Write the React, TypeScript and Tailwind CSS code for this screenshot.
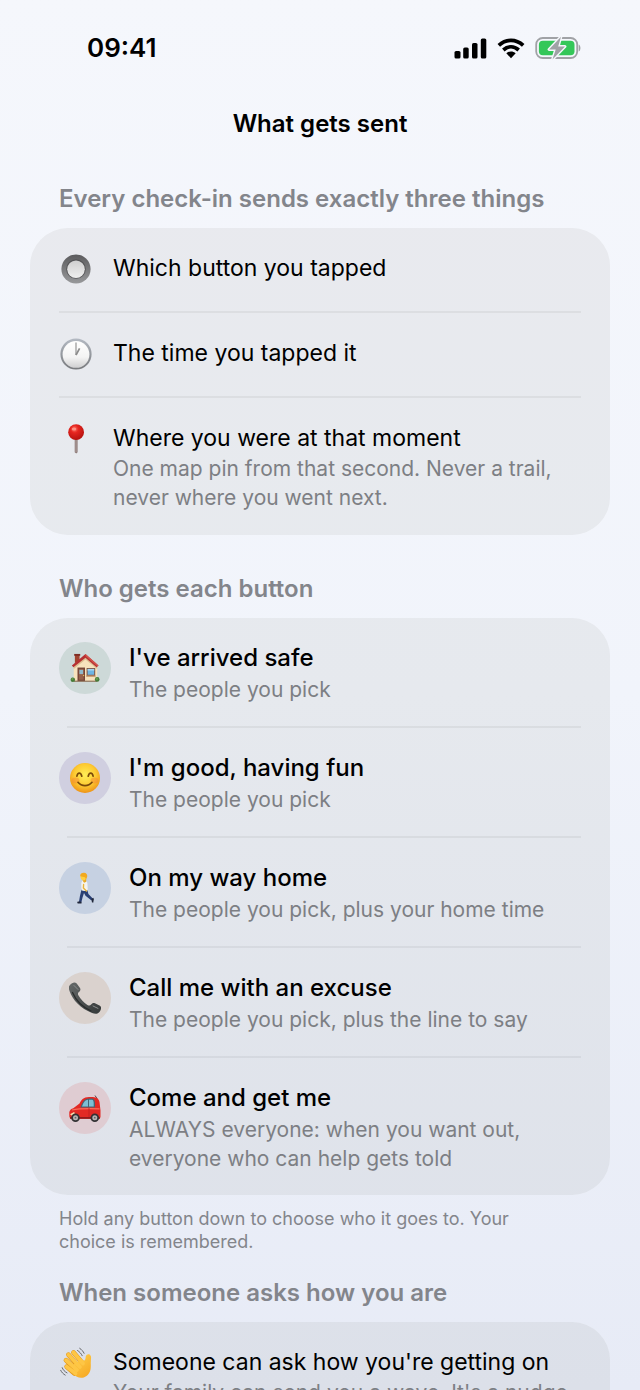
import type { ReactNode } from "react";

function RadioEmoji() {
  return (
    <svg viewBox="0 0 32 32" className="size-8" aria-hidden="true">
      <defs>
        <linearGradient id="radioRing" x1="0" y1="0" x2="0" y2="1">
          <stop offset="0" stopColor="#5b5b5d" />
          <stop offset="1" stopColor="#98999b" />
        </linearGradient>
        <linearGradient id="radioFace" x1="0" y1="0" x2="0" y2="1">
          <stop offset="0" stopColor="#cfcfcf" />
          <stop offset="1" stopColor="#efefef" />
        </linearGradient>
      </defs>
      <circle cx="16" cy="16" r="14.6" fill="url(#radioRing)" />
      <circle cx="16" cy="16" r="9.8" fill="#555557" />
      <circle cx="16" cy="16.3" r="8.8" fill="url(#radioFace)" />
    </svg>
  );
}

function ClockEmoji() {
  return (
    <svg viewBox="0 0 32 32" className="size-8" aria-hidden="true">
      <defs>
        <linearGradient id="clockRim" x1="0" y1="0" x2="0" y2="1">
          <stop offset="0" stopColor="#b4bac3" />
          <stop offset="1" stopColor="#77797c" />
        </linearGradient>
        <linearGradient id="clockFace" x1="0" y1="0" x2="0" y2="1">
          <stop offset="0" stopColor="#ffffff" />
          <stop offset="0.6" stopColor="#f4f4f4" />
          <stop offset="1" stopColor="#cfcfd0" />
        </linearGradient>
      </defs>
      <circle cx="16" cy="16" r="15.6" fill="url(#clockRim)" />
      <circle cx="16" cy="16.4" r="13.4" fill="url(#clockFace)" />
      <path d="M16 17V4.500" stroke="#8b8b8b" strokeWidth="1.100" />
      <path d="M16 17l3.600-6.700" stroke="#8b8b8b" strokeWidth="1.700" />
    </svg>
  );
}

function PinEmoji() {
  return (
    <svg viewBox="0 0 32 32" className="size-8" aria-hidden="true">
      <defs>
        <radialGradient id="pinHead" cx="0.4" cy="0.3" r="0.7">
          <stop offset="0" stopColor="#ff7566" />
          <stop offset="0.35" stopColor="#e5251f" />
          <stop offset="1" stopColor="#b5120f" />
        </radialGradient>
      </defs>
      <path d="M14.700 16h2.900v13.200l-1.400 1.400-1.500-1.400z" fill="#8d7a77" />
      <path d="M16 17v12" stroke="#b3a4a1" strokeWidth="0.900" />
      <circle cx="16.100" cy="9.200" r="7.900" fill="url(#pinHead)" />
      <ellipse cx="14" cy="6" rx="2.300" ry="1.500" fill="#ff9c90" opacity="0.800" />
    </svg>
  );
}

function HouseEmoji() {
  return (
    <svg viewBox="0 0 32 32" className="size-[30px]" aria-hidden="true">
      <path d="M5.2 1.5h5v9h-5z" fill="#a1432f" />
      <path d="M4.5 1h6.4v2H4.500z" fill="#7f2d24" />
      <path d="M4 14.500L16.500 3.500 29 14.500v15.500H4z" fill="#f7e2bd" />
      <path d="M4 14.500L16.500 3.500 29 14.500v2.500L16.500 7 4 17z" fill="#dcbd91" />
      <path d="M16.500 1L2 13.200l1.600 2L16.500 5l11.900 10.200 2-1.800z" fill="#b63032" />
      <path d="M16.500 1L30.400 13.400l-1 .9L16.500 3.300z" fill="#d5544b" />
      <path d="M8 15.500h8V30H8z" fill="#764536" />
      <path d="M9.500 17h5v11.500h-5z" fill="#98614b" />
      <path d="M10 18h4v4.500h-4z" fill="#91b9cb" />
      <circle cx="14.500" cy="24" r="0.7" fill="#e6be58" />
      <path d="M17.700 16h9.200v8.600h-9.200z" fill="#805848" />
      <path d="M18.800 17h7v6.200h-7z" fill="#6eb5e4" />
      <path d="M18.800 17h7v1.800h-7z" fill="#a3d4ef" />
      <path d="M17.300 24h10v1.500h-10z" fill="#c79b6f" />
      <path d="M4 29.500h25v1.200H4z" fill="#8a6d55" />
      <circle cx="3" cy="28.400" r="2.400" fill="#467b39" />
      <circle cx="29" cy="28.200" r="2.500" fill="#467b39" />
      <circle cx="2.600" cy="27.700" r="1.200" fill="#69994b" />
      <circle cx="28.600" cy="27.400" r="1.300" fill="#69994b" />
    </svg>
  );
}

function SmileEmoji() {
  return (
    <svg viewBox="0 0 32 32" className="size-8" aria-hidden="true">
      <defs>
        <radialGradient id="smileFace" cx="0.5" cy="0.4" r="0.6">
          <stop offset="0" stopColor="#ffee57" />
          <stop offset="0.6" stopColor="#fdca32" />
          <stop offset="1" stopColor="#ee9216" />
        </radialGradient>
      </defs>
      <circle cx="16" cy="16" r="15" fill="url(#smileFace)" />
      <ellipse cx="6.500" cy="18.500" rx="4" ry="3" fill="#f58335" opacity="0.45" />
      <ellipse cx="25.500" cy="18.500" rx="4" ry="3" fill="#f58335" opacity="0.45" />
      <g fill="none" stroke="#7a4a0a" strokeWidth="1.700" strokeLinecap="round">
        <path d="M7.900 14.200c.7-4.200 4-4.200 4.900 0" />
        <path d="M19.200 14.200c.9-4.200 4.200-4.200 4.900 0" />
        <path d="M9 20.300c3.500 4.400 10.500 4.400 14 0" />
      </g>
    </svg>
  );
}

function WalkerEmoji() {
  return (
    <svg viewBox="0 0 32 32" className="size-8" aria-hidden="true">
      <path d="M12.500 17.500h5.700l1.200 4.400 4.600 4.900-1.500 1.600-6-4.700-1.500-2.800-1.400 4.300-1.300 5.300-2.400-.2 1-6z" fill="#293e72" />
      <path d="M9 29.500l3.500.2v1.700H8.700c-.7-.7-.5-1.500.3-1.900zM22.500 27l1.700-1.300.7 1.200-.7 3.800-1.300-.5z" fill="#20273a" />
      <path d="M13.600 8.800c2-.9 4.500.1 4.800 2.400l.4 7c-2 1-4.500.9-6.300.1l-.2-6c0-1.500.4-2.900 1.300-3.500z" fill="#f5f4ef" />
      <path d="M14.600 12.500l-.2 3.500 3 3" fill="none" stroke="#e9b43d" strokeWidth="1.400" strokeLinecap="round" />
      <path d="M13.200 5h4v4.700l-2 1-1.200-1.500z" fill="#e7a928" />
      <path d="M11.500 3.800c-.2 2.600.6 4.700 2.800 4.700 2.100 0 3.200-1.900 3.100-4.500z" fill="#ffcf3f" />
      <path d="M11.200 4.200C10.800 1.800 13 .7 15 .8c2.200.1 3.700 1.700 3.200 4L17 7.200l-1-2z" fill="#f2a91f" />
    </svg>
  );
}

function PhoneEmoji() {
  return (
    <svg viewBox="0 0 32 32" className="size-8" aria-hidden="true">
      <defs>
        <linearGradient id="phoneBody" x1="0" y1="0" x2="1" y2="1">
          <stop offset="0" stopColor="#656969" />
          <stop offset="1" stopColor="#353939" />
        </linearGradient>
      </defs>
      <path
        d="M1 3C2.800.700 5.800-.500 7.700 1.400L11 6c1 1.700.1 3.200-1.400 4.300-1 .8-.8 2.100-.1 3.300 2.300 4 5.200 7 8.900 9.300 1.600 1 2.700.9 3.700-.3 1-1.500 2.300-2 3.900-1.300l5 2.500c2 1.400.9 4.700-1.100 6.700-1.600 1.700-4 1.600-6.800.5C11.600 26.400 3.900 18.500.500 9-.5 6.300-.5 4.400 1 3z"
        fill="url(#phoneBody)"
      />
      <path d="M3.500 10.500C7 18.700 13.500 25 22 29" fill="none" stroke="#282b2b" strokeWidth="1.300" strokeLinecap="round" />
      <path d="M5 3.500l4 4M24 24l5 2.400" stroke="#8b8e8e" strokeWidth="1" strokeLinecap="round" />
    </svg>
  );
}

function CarEmoji() {
  return (
    <svg viewBox="0 -2 32 32" className="size-8" aria-hidden="true">
      <path d="M28 4.500l-2-3" stroke="#574747" strokeWidth="1" />
      <path d="M10.500 9.500C13 4 16 3 22 3c5 0 7.500.7 8.500 5l1 8.500v6.500c-.3 1.300-1 1.700-2 1.700H3C1 24.700.2 23.500.3 21v-3c.5-2 2-3.200 4-3.800z" fill="#e22924" />
      <path d="M11.500 13.500C13.500 7 16 4.800 20 4.600h3.500c1.700.2 2.300 2 2.500 4.200v4.700z" fill="#436674" />
      <path d="M13 12.500c1.700-4.400 3.200-6.400 6-6.700V12.500zM20 5.800h3c1.200.2 1.600 1.600 1.700 3v3.700H20z" fill="#7dbfd4" />
      <path d="M3 16c7-1.600 19-1.500 27.500-1.200" fill="none" stroke="#f96b57" strokeWidth="1.200" />
      <path d="M1 20.300l4-2.300 1 1.200-3 2.500z" fill="#f9dfaf" />
      <path d="M1 23h30v1.800H1z" fill="#92191b" />
      <path d="M20 14v9" stroke="#b81d1d" strokeWidth="0.700" />
      <circle cx="6.500" cy="23.700" r="4.300" fill="#343234" />
      <circle cx="25.800" cy="23.700" r="4.300" fill="#343234" />
      <circle cx="6.500" cy="23.700" r="2.500" fill="#b7b4b4" />
      <circle cx="25.800" cy="23.700" r="2.500" fill="#b7b4b4" />
      <circle cx="6.500" cy="23.700" r="0.900" fill="#666" />
      <circle cx="25.800" cy="23.700" r="0.900" fill="#666" />
    </svg>
  );
}

function WaveEmoji() {
  return (
    <svg viewBox="0 0 32 32" className="size-8" aria-hidden="true">
      <defs>
        <linearGradient id="waveHand" x1="0.200" y1="0" x2="0.800" y2="1">
          <stop offset="0" stopColor="#ffcf4a" />
          <stop offset="1" stopColor="#f6a823" />
        </linearGradient>
      </defs>
      <g fill="none" stroke="#e59a1c" strokeLinecap="round" strokeWidth="4.800">
        <path d="M13.500 5.500L22 15.500" />
        <path d="M8.500 7.700L18 19" />
        <path d="M6 13.200L15.500 23" />
        <path d="M6.700 19.700L14.500 26.500" />
      </g>
      <path d="M14 17l8-5c2.500 3.300 3.500 1 3.700-2.200.2-3 4.300-3.600 5.200-.5.500 2-.3 4.600-.1 7.700.1 5.500-.3 9-4.300 12-4.500 3.200-9.500 2-13.500-2z" fill="url(#waveHand)" />
      <g fill="none" stroke="#fec645" strokeLinecap="round" strokeWidth="3.700">
        <path d="M13.500 5.500L23 16.500" />
        <path d="M8.500 7.700L20 20" />
        <path d="M6 13.200L17 23" />
        <path d="M6.700 19.700L15.500 26.500" />
      </g>
      <g fill="none" stroke="#68696c" strokeWidth="1" strokeLinecap="round">
        <path d="M17.500 3.500c2.200 1.300 3.600 3 4.700 5.200" />
        <path d="M19.700 1.300c2 1.300 3.400 3 4.400 5" />
        <path d="M2.200 20.700c.9 2.300 2.500 4 4.800 5.200" />
        <path d="M.700 23.300c1 2.100 2.500 3.700 4.500 4.800" />
      </g>
    </svg>
  );
}

function StatusBar() {
  return (
    <header className="flex items-center justify-between pt-8 pr-[59px] pl-[87px]">
      <time className="text-[26px] leading-8 font-semibold">09:41</time>
      <div className="flex items-center gap-[10px]">
        <svg viewBox="0 0 33 21" className="h-[21px] w-[33px]" aria-label="Signal">
          <rect x="0.500" y="13" width="6" height="7.500" rx="1.600" />
          <rect x="9.200" y="9.500" width="5.500" height="11" rx="1.600" />
          <rect x="18" y="5" width="5.500" height="15.500" rx="1.600" />
          <rect x="26.800" y="0.500" width="5.500" height="20" rx="1.600" />
        </svg>
        <svg viewBox="0 0 28 21" className="h-[21px] w-7" aria-label="Wi-Fi">
          <g fill="none" stroke="#000" strokeWidth="3.700">
            <path d="M1.800 7.300C9 .600 19 .600 26.200 7.300" />
            <path d="M6.300 12C11 7.800 17 7.800 21.700 12" />
          </g>
          <path d="M9.300 15.200c2.700-2.300 6.700-2.300 9.400 0L14 20.200z" />
        </svg>
        <svg viewBox="0 0 46 24" className="h-6 w-[46px]" aria-label="Battery charging">
          <rect x="1.200" y="2" width="41" height="20" rx="6.500" fill="none" stroke="#a0a2a6" strokeWidth="1.800" />
          <path d="M43.700 8.500c2.300 1 2.300 6 0 7z" fill="#a0a2a6" />
          <rect x="3.900" y="4.700" width="35.600" height="14.600" rx="4" fill="#34c759" />
          <path
            d="M26 .700L14 13.500h6.700L17.500 23.500 30 10.500h-6.800z"
            fill="#a0a2a6"
            stroke="#f5f7fc"
            strokeWidth="2.800"
            strokeLinejoin="round"
            paintOrder="stroke"
          />
        </svg>
      </div>
    </header>
  );
}

type Fact = { icon: ReactNode; title: string; detail?: string };

function FactList({ items }: { items: Fact[] }) {
  return (
    <ul className="mx-[30px] rounded-[38px] bg-[#1c1c00]/5 px-[29px]">
      {items.map((item) => (
        <li key={item.title} className="flex gap-5 border-b-2 border-black/5 pt-6 pb-[26px] last:border-0 last:pb-[23px]">
          <span className="mt-px flex w-[34px] shrink-0 justify-center">{item.icon}</span>
          <div>
            <h3 className="text-[23px] leading-8">{item.title}</h3>
            {item.detail && <p className="text-[21px] leading-[29px] text-[#7d7f84]">{item.detail}</p>}
          </div>
        </li>
      ))}
    </ul>
  );
}

type CheckIn = { icon: ReactNode; tint: string; title: string; detail: string };

const checkIns: CheckIn[] = [
  { icon: <HouseEmoji />, tint: "bg-[#cdd9d8]", title: "I've arrived safe", detail: "The people you pick" },
  { icon: <SmileEmoji />, tint: "bg-[#d0cfe0]", title: "I'm good, having fun", detail: "The people you pick" },
  { icon: <WalkerEmoji />, tint: "bg-[#c6d1e2]", title: "On my way home", detail: "The people you pick, plus your home time" },
  { icon: <PhoneEmoji />, tint: "bg-[#dad2ce]", title: "Call me with an excuse", detail: "The people you pick, plus the line to say" },
  {
    icon: <CarEmoji />,
    tint: "bg-[#dfccd2]",
    title: "Come and get me",
    detail: "ALWAYS everyone: when you want out, everyone who can help gets told",
  },
];

function CheckInList() {
  return (
    <ul className="mx-[30px] rounded-[38px] bg-[#1c1c00]/5 px-[29px]">
      {checkIns.map((item, index) => (
        <li key={item.title}>
          <div className="flex gap-[18px] pt-6 pb-[22px]">
            <span className={`flex size-[52px] shrink-0 items-center justify-center rounded-full ${item.tint}`}>{item.icon}</span>
            <div>
              <h3 className="text-[24px] leading-8 font-medium">{item.title}</h3>
              <p className="mt-px text-[21px] leading-[29px] text-[#7d7f84]">{item.detail}</p>
            </div>
          </div>
          {index < checkIns.length - 1 && <hr className="ml-2 border-t-2 border-black/5" />}
        </li>
      ))}
    </ul>
  );
}

function SectionTitle({ children }: { children: ReactNode }) {
  return <h2 className="mb-[13px] px-[59px] text-[24px] leading-8 font-semibold text-[#83858b]">{children}</h2>;
}

export default function App() {
  return (
    <div className="h-screen overflow-hidden bg-linear-to-b from-[#f5f7fc] via-[#f1f4fb] to-[#e7ebf6] font-['Inter','Liberation_Sans',sans-serif] text-black">
      <StatusBar />
      <main>
        <h1 className="mt-11 text-center text-[24px] leading-8 font-semibold">What gets sent</h1>
        <section className="mt-[43px]">
          <SectionTitle>Every check-in sends exactly three things</SectionTitle>
          <FactList
            items={[
              { icon: <RadioEmoji />, title: "Which button you tapped" },
              { icon: <ClockEmoji />, title: "The time you tapped it" },
              {
                icon: <PinEmoji />,
                title: "Where you were at that moment",
                detail: "One map pin from that second. Never a trail, never where you went next.",
              },
            ]}
          />
        </section>
        <section className="mt-[38px]">
          <SectionTitle>Who gets each button</SectionTitle>
          <CheckInList />
          <p className="mt-3 pr-[90px] pl-[59px] text-[18px] leading-[23px] text-[#83858b]">
            Hold any button down to choose who it goes to. Your choice is remembered.
          </p>
        </section>
        <section className="mt-6">
          <SectionTitle>When someone asks how you are</SectionTitle>
          <FactList
            items={[
              {
                icon: <WaveEmoji />,
                title: "Someone can ask how you're getting on",
                detail: "Your family can send you a wave. It's a nudge",
              },
            ]}
          />
        </section>
      </main>
    </div>
  );
}
